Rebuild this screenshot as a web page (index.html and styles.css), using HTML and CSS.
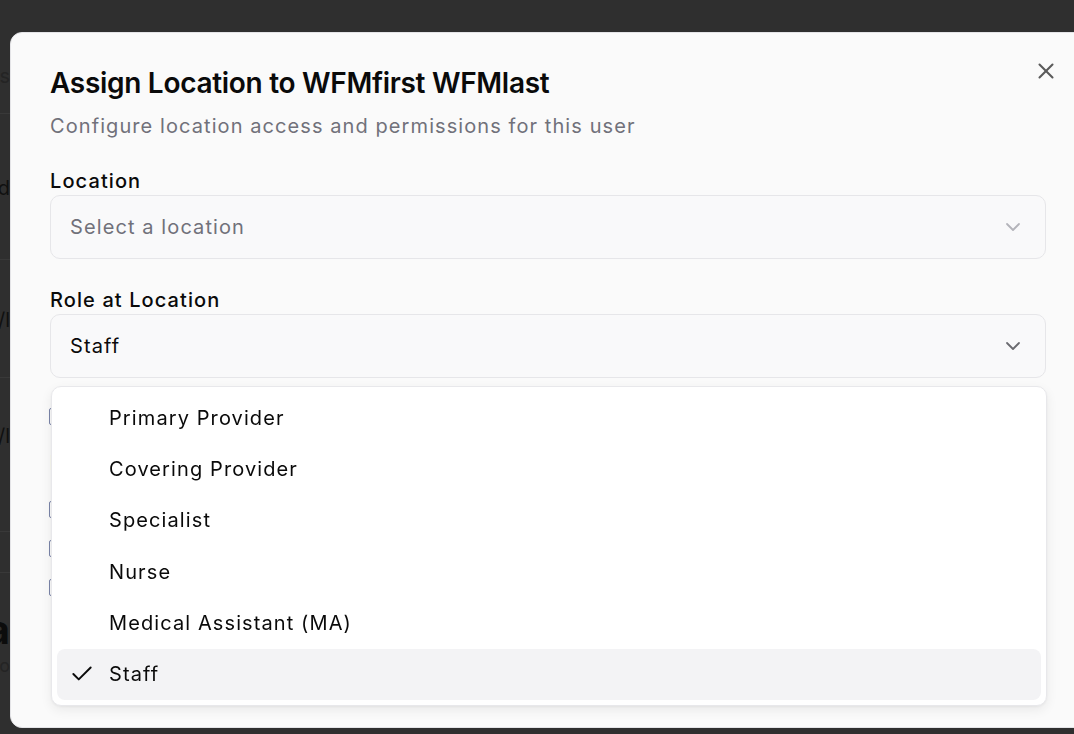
FILE: index.html
```html
<!DOCTYPE html>
<html lang="en">
<head>
<meta charset="utf-8">
<title>Assign Location</title>
<link rel="stylesheet" href="styles.css">
</head>
<body>
<div class="page">
  <div class="pg-row pg-search">Search users</div>
  <div class="pg-rule r1"></div>
  <div class="pg-row pg-text t1">Assigned</div>
  <div class="pg-rule r2"></div>
  <div class="pg-row pg-text t2">N/l</div>
  <div class="pg-rule r3"></div>
  <div class="pg-row pg-text t3">N/l</div>
  <div class="pg-rule r4"></div>
  <div class="pg-rule r5"></div>
  <div class="pg-row pg-big">Data</div>
  <div class="pg-row pg-small">Info</div>
</div>

<div class="dialog" role="dialog" aria-labelledby="dlg-title">
  <button class="close" aria-label="Close">
    <svg viewBox="0 0 24 24" width="26" height="26" fill="none" stroke="currentColor" stroke-width="1.9" stroke-linecap="round" stroke-linejoin="round"><path d="M18 6 6 18"/><path d="m6 6 12 12"/></svg>
  </button>
  <header class="dlg-head">
    <h2 class="dlg-title" id="dlg-title">Assign Location to WFMfirst WFMlast</h2>
    <p class="dlg-desc">Configure location access and permissions for this user</p>
  </header>

  <div class="field f-location">
    <label class="lbl">Location</label>
    <div class="select">
      <span class="placeholder">Select a location</span>
      <svg class="chev chev-muted" viewBox="0 0 24 24" width="24" height="24" fill="none" stroke="currentColor" stroke-width="1.8" stroke-linecap="round" stroke-linejoin="round"><path d="m6 9 6 6 6-6"/></svg>
    </div>
  </div>

  <div class="field f-role">
    <label class="lbl">Role at Location</label>
    <div class="select">
      <span class="value">Staff</span>
      <svg class="chev" viewBox="0 0 24 24" width="24" height="24" fill="none" stroke="currentColor" stroke-width="1.8" stroke-linecap="round" stroke-linejoin="round"><path d="m6 9 6 6 6-6"/></svg>
    </div>
    <div class="menu" role="listbox">
      <div class="opt">Primary Provider</div>
      <div class="opt">Covering Provider</div>
      <div class="opt">Specialist</div>
      <div class="opt">Nurse</div>
      <div class="opt">Medical Assistant (MA)</div>
      <div class="opt opt-selected">
        <svg class="check" viewBox="0 0 24 24" width="26" height="26" fill="none" stroke="currentColor" stroke-width="1.8" stroke-linecap="round" stroke-linejoin="round"><path d="M20 6 9 17l-5-5"/></svg>
        Staff
      </div>
    </div>
  </div>

  <label class="cb-row cb-first"><span class="cb"></span>Set as primary location</label>
  <div class="perm-title">Permissions</div>
  <label class="cb-row"><span class="cb"></span>Can view schedules</label>
  <label class="cb-row"><span class="cb"></span>Can edit schedules</label>
  <label class="cb-row"><span class="cb"></span>Can approve time off</label>
</div>
</body>
</html>
```

FILE: styles.css
```css
* { box-sizing: border-box; }

html, body {
  margin: 0;
  padding: 0;
  height: 734px;
  overflow: hidden;
}

body {
  background: #2f2f2f;
  font-family: Inter, "Noto Sans", "Liberation Sans", sans-serif;
  color: #0a0a0a;
}

.page {
  width: 10px;
  overflow: hidden;
  display: flex;
  flex-direction: column;
}
.pg-row {
  display: flex;
  justify-content: flex-end;
  white-space: nowrap;
  font-size: 20px;
  line-height: 28px;
}
.pg-search { margin-top: 62px; color: #242424; }
.pg-rule { height: 1px; background: #393939; flex: none; width: 10px; }
.r1 { margin-top: 23px; }
.pg-text { color: #101010; }
.t1 { margin-top: 60px; }
.r2 { margin-top: 57px; }
.t2 { margin-top: 46px; }
.r3 { margin-top: 43px; }
.t3 { margin-top: 44px; }
.r4 { margin-top: 81px; }
.r5 { margin-top: 40px; }
.pg-big { margin-top: 33px; font-size: 40px; line-height: 48px; font-weight: 700; color: #0c0c0c; }
.pg-small { font-size: 18px; line-height: 24px; color: #242424; }

/* dialog */
.dialog {
  position: fixed;
  left: 10px;
  top: 32px;
  width: 1076px;
  height: 696px;
  background: #fafafa;
  border: 1px solid #e4e4e7;
  border-radius: 12px;
  padding: 33px 39px 0 39px;
  display: flex;
  flex-direction: column;
}

.close {
  position: absolute;
  right: 26px;
  top: 25px;
  width: 26px;
  height: 26px;
  padding: 0;
  border: 0;
  background: transparent;
  color: #5a5a5a;
  display: flex;
}

.dlg-head { display: flex; flex-direction: column; }
.dlg-title {
  margin: 0;
  font-size: 28px;
  line-height: 34px;
  font-weight: 600;
  letter-spacing: -0.3px;
  color: #0a0a0a;
}
.dlg-desc {
  margin: 12px 0 0;
  font-size: 20px;
  line-height: 28px;
  letter-spacing: 1.08px;
  color: #71717a;
}

.field { display: flex; flex-direction: column; }
.f-location { margin-top: 27px; }
.f-role { margin-top: 27px; position: relative; }

.lbl {
  font-size: 20px;
  line-height: 28px;
  font-weight: 500;
  letter-spacing: 1.1px;
  color: #0a0a0a;
}

.select {
  height: 64px;
  border: 1px solid #e6e6e9;
  border-radius: 10px;
  background: #f9f9fa;
  display: flex;
  align-items: center;
  justify-content: space-between;
  padding: 0 20px 0 19px;
  font-size: 20px;
  letter-spacing: 1.1px;
  color: #0a0a0a;
}
.placeholder { color: #71717a; }
.chev { color: #6b6b70; flex: none; }
.chev-muted { color: #b4b4ba; }

.menu {
  position: absolute;
  top: calc(100% + 8px);
  left: 1px;
  right: -1px;
  background: #ffffff;
  border: 1px solid #e8e8eb;
  border-radius: 10px;
  padding: 5px;
  box-shadow: 0 4px 12px rgba(0, 0, 0, 0.07), 0 1px 3px rgba(0, 0, 0, 0.05);
  z-index: 2;
}
.opt {
  position: relative;
  height: 51.33px;
  display: flex;
  align-items: center;
  padding-left: 52px;
  font-size: 20px;
  letter-spacing: 1.1px;
  color: #0a0a0a;
  border-radius: 8px;
}
.opt-selected { background: #f3f3f5; }
.check {
  position: absolute;
  left: 12px;
  top: 50%;
  transform: translateY(-50%);
}

/* checkboxes under the menu */
.cb-row {
  display: flex;
  align-items: center;
  gap: 12px;
  height: 17px;
  font-size: 18px;
  margin-top: 22px;
  margin-left: -1px;
}
.cb-first { margin-top: 30px; }
.cb {
  width: 17px;
  height: 17px;
  border: 1px solid #7a84a8;
  border-radius: 2px;
  flex: none;
}
.perm-title {
  margin-top: 24px;
  margin-bottom: 2px;
  font-size: 20px;
  line-height: 28px;
  font-weight: 500;
}
```
